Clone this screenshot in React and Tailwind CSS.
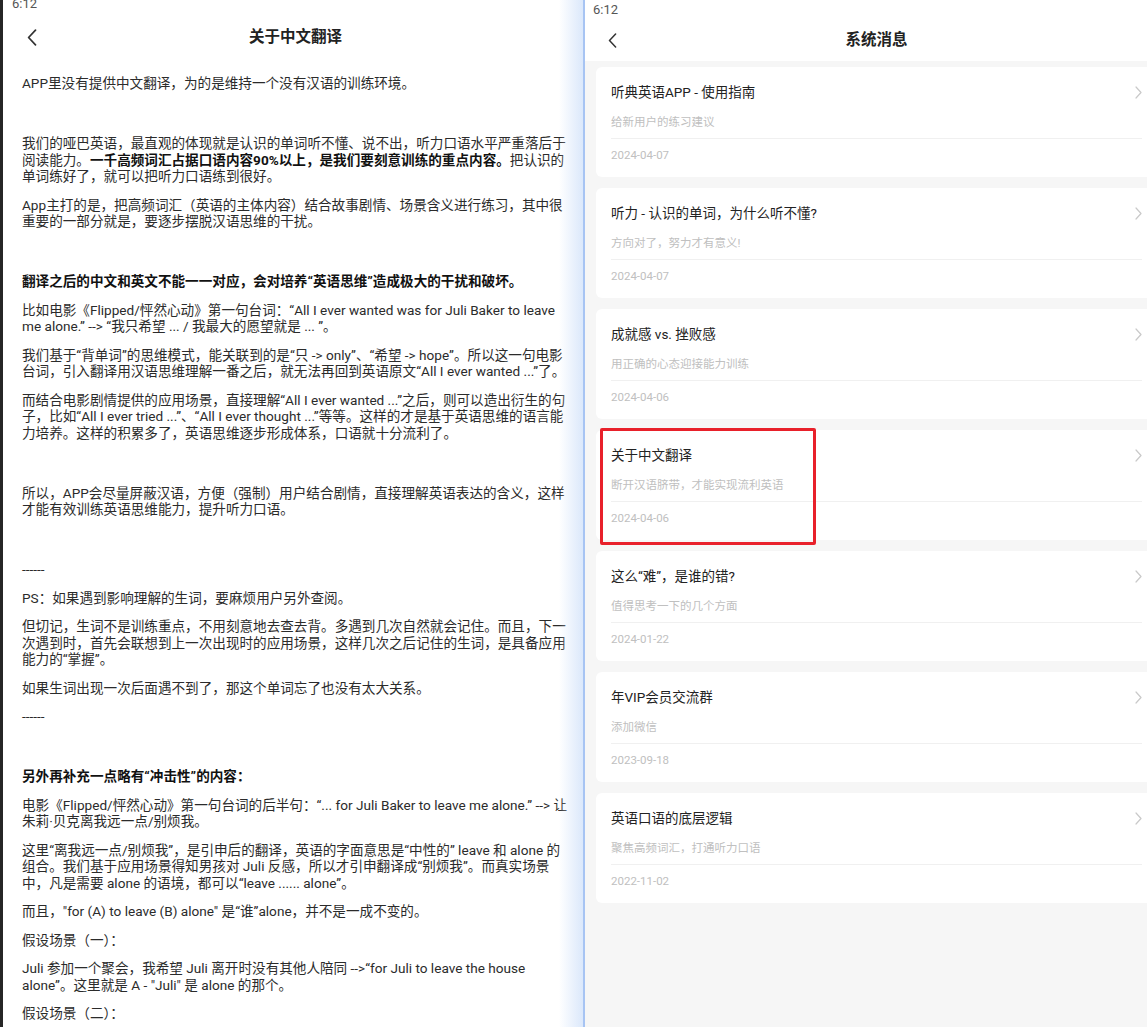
import React from "react";

const FONT = { fontFamily: "Roboto, 'Noto Sans CJK SC', 'Noto Sans', sans-serif" };

// each paragraph is a list of lines; a line is a list of [text, bold] runs
const article = [
  [[["APP里没有提供中文翻译，为的是维持一个没有汉语的训练环境。"]]],
  null,
  [
    [["我们的哑巴英语，最直观的体现就是认识的单词听不懂、说不出，听力口语水平严重落后于"]],
    [["阅读能力。"], ["一千高频词汇占据口语内容90%以上，是我们要刻意训练的重点内容。", true], ["把认识的"]],
    [["单词练好了，就可以把听力口语练到很好。"]],
  ],
  [
    [["App主打的是，把高频词汇（英语的主体内容）结合故事剧情、场景含义进行练习，其中很"]],
    [["重要的一部分就是，要逐步摆脱汉语思维的干扰。"]],
  ],
  null,
  [[["翻译之后的中文和英文不能一一对应，会对培养“英语思维”造成极大的干扰和破坏。", true]]],
  [
    [["比如电影《Flipped/怦然心动》第一句台词：“All I ever wanted was for Juli Baker to leave"]],
    [["me alone.” --> “我只希望 ... / 我最大的愿望就是 ... ”。"]],
  ],
  [
    [["我们基于“背单词”的思维模式，能关联到的是“只 -> only”、“希望 -> hope”。所以这一句电影"]],
    [["台词，引入翻译用汉语思维理解一番之后，就无法再回到英语原文“All I ever wanted ...”了。"]],
  ],
  [
    [["而结合电影剧情提供的应用场景，直接理解“All I ever wanted ...”之后，则可以造出衍生的句"]],
    [["子，比如“All I ever tried ...”、“All I ever thought ...”等等。这样的才是基于英语思维的语言能"]],
    [["力培养。这样的积累多了，英语思维逐步形成体系，口语就十分流利了。"]],
  ],
  null,
  [
    [["所以，APP会尽量屏蔽汉语，方便（强制）用户结合剧情，直接理解英语表达的含义，这样"]],
    [["才能有效训练英语思维能力，提升听力口语。"]],
  ],
  null,
  [[["------"]]],
  [[["PS：如果遇到影响理解的生词，要麻烦用户另外查阅。"]]],
  [
    [["但切记，生词不是训练重点，不用刻意地去查去背。多遇到几次自然就会记住。而且，下一"]],
    [["次遇到时，首先会联想到上一次出现时的应用场景，这样几次之后记住的生词，是具备应用"]],
    [["能力的“掌握”。"]],
  ],
  [[["如果生词出现一次后面遇不到了，那这个单词忘了也没有太大关系。"]]],
  [[["------"]]],
  null,
  [[["另外再补充一点略有“冲击性”的内容：", true]]],
  [
    [["电影《Flipped/怦然心动》第一句台词的后半句：“... for Juli Baker to leave me alone.” --> 让"]],
    [["朱莉·贝克离我远一点/别烦我。"]],
  ],
  [
    [["这里“离我远一点/别烦我”，是引申后的翻译，英语的字面意思是“中性的” leave 和 alone 的"]],
    [["组合。我们基于应用场景得知男孩对 Juli 反感，所以才引申翻译成“别烦我”。而真实场景"]],
    [["中，凡是需要 alone 的语境，都可以“leave ...... alone”。"]],
  ],
  [[["而且，\"for (A) to leave (B) alone\" 是“谁”alone，并不是一成不变的。"]]],
  [[["假设场景（一）："]]],
  [
    [["Juli 参加一个聚会，我希望 Juli 离开时没有其他人陪同 -->“for Juli to leave the house"]],
    [["alone”。这里就是 A - \"Juli\" 是 alone 的那个。"]],
  ],
  [[["假设场景（二）："]]],
];

const messages = [
  { title: "听典英语APP - 使用指南", sub: "给新用户的练习建议", date: "2024-04-07" },
  { title: "听力 - 认识的单词，为什么听不懂?", sub: "方向对了，努力才有意义!", date: "2024-04-07" },
  { title: "成就感 vs. 挫败感", sub: "用正确的心态迎接能力训练", date: "2024-04-06" },
  { title: "关于中文翻译", sub: "断开汉语脐带，才能实现流利英语", date: "2024-04-06", marked: true },
  { title: "这么“难”，是谁的错?", sub: "值得思考一下的几个方面", date: "2024-01-22" },
  { title: "年VIP会员交流群", sub: "添加微信", date: "2023-09-18" },
  { title: "英语口语的底层逻辑", sub: "聚焦高频词汇，打通听力口语", date: "2022-11-02" },
];

function BackArrow({ className }) {
  return (
    <svg viewBox="0 0 10 17" className={className} fill="none">
      <path d="M8.5 1.2 1.6 8.5l6.9 7.3" stroke="#333" strokeWidth="1.7" strokeLinecap="round" strokeLinejoin="round" />
    </svg>
  );
}

function ArticlePanel() {
  return (
    <div className="relative w-[585px] shrink-0 overflow-hidden bg-white">
      <div className="h-[10px] overflow-hidden pl-[12px]">
        <div className="-mt-[5px] text-[13px] leading-[18px] text-[#555]">6:12</div>
      </div>
      <div className="relative flex h-[55px] items-center justify-center">
        <BackArrow className="absolute left-[27px] top-[19px] h-[17px] w-[10px]" />
        <h1 className="pl-[6px] text-[15.5px] font-bold text-[#222]">关于中文翻译</h1>
      </div>
      <div className="px-[22px] pt-[10px] text-[13.6px] leading-[16.5px] text-[#2b2b2b]">
        {article.map((para, i) =>
          para === null ? (
            <div key={i} className="mb-[12.5px] h-[19px]" />
          ) : (
            <p key={i} className="mb-[12px]">
              {para.map((line, j) => (
                <span key={j} className="block whitespace-nowrap">
                  {line.map(([text, bold], k) =>
                    bold ? (
                      <b key={k} className="font-bold text-[#111]">{text}</b>
                    ) : (
                      <span key={k}>{text}</span>
                    )
                  )}
                </span>
              ))}
            </p>
          )
        )}
      </div>
      <div className="pointer-events-none absolute inset-y-0 left-0 w-[3px] bg-[#262626]" />
      <div className="pointer-events-none absolute inset-y-0 right-[2px] w-[24px] bg-gradient-to-r from-white/0 to-[#dbe8fb]" />
      <div className="pointer-events-none absolute inset-y-0 right-0 w-[2px] bg-[#a7c4f3]" />
    </div>
  );
}

function MessageCard({ msg }) {
  return (
    <div className="relative rounded-[6px] bg-white px-[15px] pb-[14px] pt-[16px]">
      <div className="flex items-center justify-between">
        <span className="text-[13.5px] leading-[18px] text-[#222]">{msg.title}</span>
        <svg viewBox="0 0 7 13" className="h-[13px] w-[7px]" fill="none">
          <path d="M1 1l5 5.5L1 12" stroke="#c9c9c9" strokeWidth="1.2" strokeLinecap="round" strokeLinejoin="round" />
        </svg>
      </div>
      <div className="mt-[13px] border-b border-[#f0f0f0] pb-[8px] text-[11.5px] leading-[16px] text-[#c0c0c0]">
        {msg.sub}
      </div>
      <div className="pt-[8px] text-[11.5px] leading-[16px] text-[#c0c0c0]">{msg.date}</div>
      {msg.marked && (
        <div className="pointer-events-none absolute left-[4px] -top-[2px] h-[117px] w-[216px] rounded-[2px] border-[3px] border-[#e8202a]" />
      )}
    </div>
  );
}

function MessagePanel() {
  return (
    <div className="flex min-w-0 flex-1 flex-col overflow-hidden bg-[#f6f6f6]">
      <div className="w-[583px] bg-white">
        <div className="h-[21px] pl-[8px] pt-[1px] text-[13px] leading-[17px] text-[#555]">6:12</div>
        <div className="relative flex h-[40px] items-center justify-center">
          <BackArrow className="absolute left-[23px] top-[12px] h-[15px] w-[9px]" />
          <h1 className="text-[15.5px] font-semibold text-[#222]">系统消息</h1>
        </div>
      </div>
      <div className="flex w-[583px] flex-col gap-[11px] px-[11px] pt-[6px]">
        {messages.map((m) => (
          <MessageCard key={m.title} msg={m} />
        ))}
      </div>
    </div>
  );
}

export default function App() {
  return (
    <div className="flex h-[1027px] w-[1147px] overflow-hidden bg-white" style={FONT}>
      <ArticlePanel />
      <MessagePanel />
    </div>
  );
}
